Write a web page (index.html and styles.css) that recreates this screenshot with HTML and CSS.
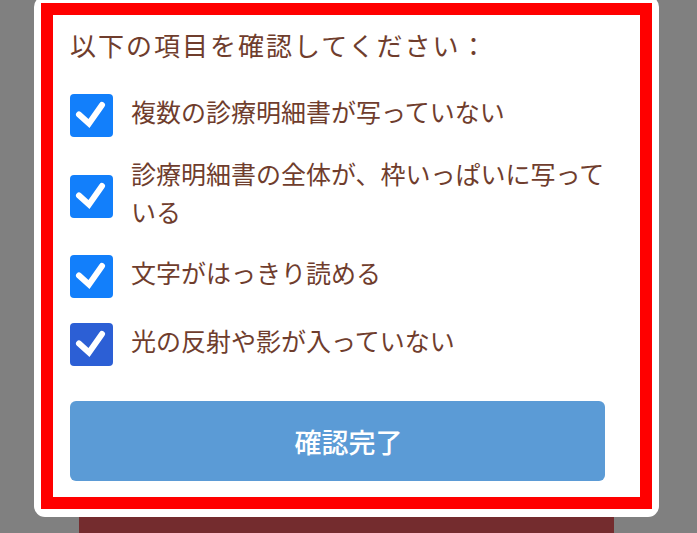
FILE: index.html
```html
<!DOCTYPE html>
<html lang="ja">
<head>
<meta charset="utf-8">
<title>確認</title>
<link rel="stylesheet" href="styles.css">
</head>
<body>
<div class="stage">
  <div class="card">
    <div class="frame">
      <h2 class="title">以下の項目を確認してください：</h2>
      <ul class="checklist">
        <li class="item">
          <span class="box"><svg viewBox="0 0 43 43"><path d="M9 20.5 L19 29.5 L32 11"/></svg></span>
          <span class="label">複数の診療明細書が写っていない</span>
        </li>
        <li class="item">
          <span class="box"><svg viewBox="0 0 43 43"><path d="M9 20.5 L19 29.5 L32 11"/></svg></span>
          <span class="label">診療明細書の全体が、枠いっぱいに写っている</span>
        </li>
        <li class="item">
          <span class="box"><svg viewBox="0 0 43 43"><path d="M9 20.5 L19 29.5 L32 11"/></svg></span>
          <span class="label">文字がはっきり読める</span>
        </li>
        <li class="item">
          <span class="box box-focus"><svg viewBox="0 0 43 43"><path d="M9 20.5 L19 29.5 L32 11"/></svg></span>
          <span class="label">光の反射や影が入っていない</span>
        </li>
      </ul>
      <button class="confirm" type="button">確認完了</button>
    </div>
  </div>
  <div class="under-bar"></div>
</div>
</body>
</html>
```

FILE: styles.css
```css
html, body {
  margin: 0;
  padding: 0;
}
body {
  background: #808080;
  height: 533px;
  overflow: hidden;
  font-family: "Noto Sans CJK JP", "Noto Sans", sans-serif;
}
.stage {
  width: 625px;
  margin-left: 34px;
}
.card {
  background: #ffffff;
  margin-top: -4px;
  padding: 7px 7px 8px 7px;
  border-radius: 11px;
}
.frame {
  border: 12px solid #ff0000;
  padding: 12px 17px 16px 17px;
}
.title {
  margin: 0;
  font-size: 26px;
  line-height: 36px;
  font-weight: normal;
  letter-spacing: 2px;
  color: #6f3d2d;
}
.checklist {
  list-style: none;
  margin: 24px 0 0 0;
  padding: 0;
  display: flex;
  flex-direction: column;
  gap: 18px;
}
.item {
  display: flex;
  align-items: center;
  gap: 18px;
  min-height: 50px;
}
.box {
  flex: 0 0 43px;
  width: 43px;
  height: 43px;
  border-radius: 4px;
  background: #127ffb;
  display: flex;
  margin-top: 7px;
}
.box-focus {
  background: #2c5fd5;
}
.box svg {
  width: 43px;
  height: 43px;
}
.box path {
  fill: none;
  stroke: #ffffff;
  stroke-width: 6;
  stroke-linecap: round;
  stroke-linejoin: miter;
}
.label {
  font-size: 25px;
  line-height: 37.5px;
  color: #6f3d2d;
}
.confirm {
  display: block;
  margin-top: 35px;
  width: 535px;
  height: 80px;
  border: none;
  border-radius: 6px;
  background: #5b9bd6;
  color: #ffffff;
  font-family: "Noto Sans CJK JP", "Noto Sans", sans-serif;
  font-size: 27px;
  font-weight: 500;
  padding: 0 0 0 22px;
}
.under-bar {
  margin: 0 45px;
  height: 20px;
  background: #742c2e;
}
```
